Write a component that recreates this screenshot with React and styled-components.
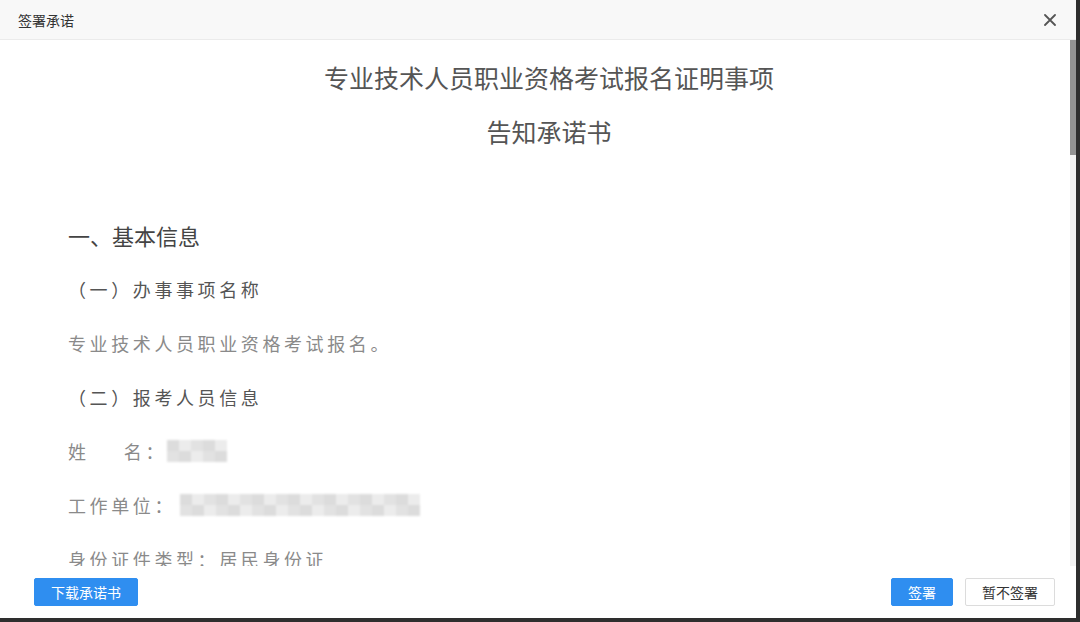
import React from 'react';
import styled, { createGlobalStyle } from 'styled-components';

const GlobalStyle = createGlobalStyle`
	html, body {
		margin: 0;
		padding: 0;
		background: #2e2e2e;
		font-family: "Noto Sans CJK SC", "Noto Sans", sans-serif;
	}
`;

const Dialog = styled.div`
	width: 1076px;
	height: 618px;
	background: #fff;
	display: flex;
	flex-direction: column;
	overflow: hidden;
`;

const Header = styled.div`
	height: 39px;
	flex: none;
	background: #f8f8f8;
	border-bottom: 1px solid #ebebeb;
	display: flex;
	align-items: center;
	justify-content: space-between;
	padding: 0 18px;
`;

const HeaderTitle = styled.span`
	font-size: 14px;
	color: #333;
`;

const Close = styled.button`
	border: none;
	background: none;
	padding: 0;
	width: 16px;
	height: 16px;
	display: flex;
	align-items: center;
	justify-content: center;
	cursor: pointer;
`;

const Body = styled.div`
	flex: 1;
	position: relative;
	overflow: hidden;
`;

// drawn scrollbar, lies over the right edge of the scroll area
const Track = styled.div`
	position: absolute;
	top: 0;
	right: 0;
	bottom: 0;
	width: 6px;
	background: #f3f3f3;
`;

const Thumb = styled.div`
	height: 115px;
	background: #939393;
`;

const Doc = styled.div`
	padding: 10px 46px 40px 68px;
	box-sizing: border-box;
`;

const DocTitle = styled.div`
	text-align: center;
	font-size: 25px;
	line-height: 54px;
	color: #555;
`;

const Heading = styled.div`
	margin-top: ${({ gap }) => gap}px;
	font-size: 22px;
	line-height: 54px;
	color: #444;
`;

const Line = styled.div`
	font-size: 18px;
	line-height: 54px;
	letter-spacing: 3.6px;
	color: ${({ strong }) => (strong ? '#555' : '#8a8a8a')};
	display: flex;
	align-items: center;
	white-space: nowrap;
`;

const Mosaic = styled.div`
	display: grid;
	grid-template-columns: repeat(${({ cols }) => cols}, 12px);
	grid-auto-rows: 11px;
	filter: blur(1.2px);
	margin-left: ${({ offset }) => offset}px;
`;

const Cell = styled.div`
	background: ${({ shade }) => shade};
`;

const Footer = styled.div`
	height: 52px;
	flex: none;
	display: flex;
	align-items: center;
	justify-content: space-between;
	padding: 0 21px 0 34px;
	background: #fff;
`;

const Group = styled.div`
	display: flex;
	gap: 12px;
`;

const Button = styled.button`
	height: 28px;
	padding: 0 ${({ pad }) => pad}px;
	border-radius: 2px;
	font-family: "Noto Sans CJK SC", sans-serif;
	font-size: 14px;
	cursor: pointer;
	background: ${({ primary }) => (primary ? '#2f8ef0' : '#fff')};
	color: ${({ primary }) => (primary ? '#fff' : '#333')};
	border: 1px solid ${({ primary }) => (primary ? '#2f8ef0' : '#dcdcdc')};
`;

const shades = ['#dcdcdc', '#eaeaea', '#e2e2e2', '#f2f2f2', '#d6d6d6', '#ececec', '#e6e6e6', '#f5f5f5'];

const Blur = ({ cols, offset }) => {
	const cells = [];
	for (let i = 0; i < cols * 2; i++) {
		cells.push(<Cell key={i} shade={shades[(i * 5 + Math.floor(i / 3)) % shades.length]} />);
	}
	return (
		<Mosaic cols={cols} offset={offset}>
			{cells}
		</Mosaic>
	);
};

const App = () => (
	<>
		<GlobalStyle />
		<Dialog>
			<Header>
				<HeaderTitle>签署承诺</HeaderTitle>
				<Close>
					<svg width="12" height="12" viewBox="0 0 12 12">
						<path d="M1 1 L11 11 M11 1 L1 11" stroke="#555" strokeWidth="1.8" strokeLinecap="round" />
					</svg>
				</Close>
			</Header>
			<Body>
				<Doc>
					<DocTitle>专业技术人员职业资格考试报名证明事项</DocTitle>
					<DocTitle>告知承诺书</DocTitle>
					<Heading gap={50}>一、基本信息</Heading>
					<Line strong>（一）办事事项名称</Line>
					<Line>专业技术人员职业资格考试报名。</Line>
					<Line strong>（二）报考人员信息</Line>
					<Line>
						姓{'\u2003\u2002'}名：
						<Blur cols={5} offset={0} />
					</Line>
					<Line>
						工作单位：
						<Blur cols={20} offset={4} />
					</Line>
					<Line>身份证件类型：居民身份证</Line>
					<Line>身份证件号码：</Line>
					<Line>联系电话：</Line>
					<Heading gap={0}>二、告知内容</Heading>
				</Doc>
				<Track>
					<Thumb />
				</Track>
			</Body>
			<Footer>
				<Button primary pad={16}>下载承诺书</Button>
				<Group>
					<Button primary pad={16}>签署</Button>
					<Button pad={16}>暂不签署</Button>
				</Group>
			</Footer>
		</Dialog>
	</>
);

export default App;
